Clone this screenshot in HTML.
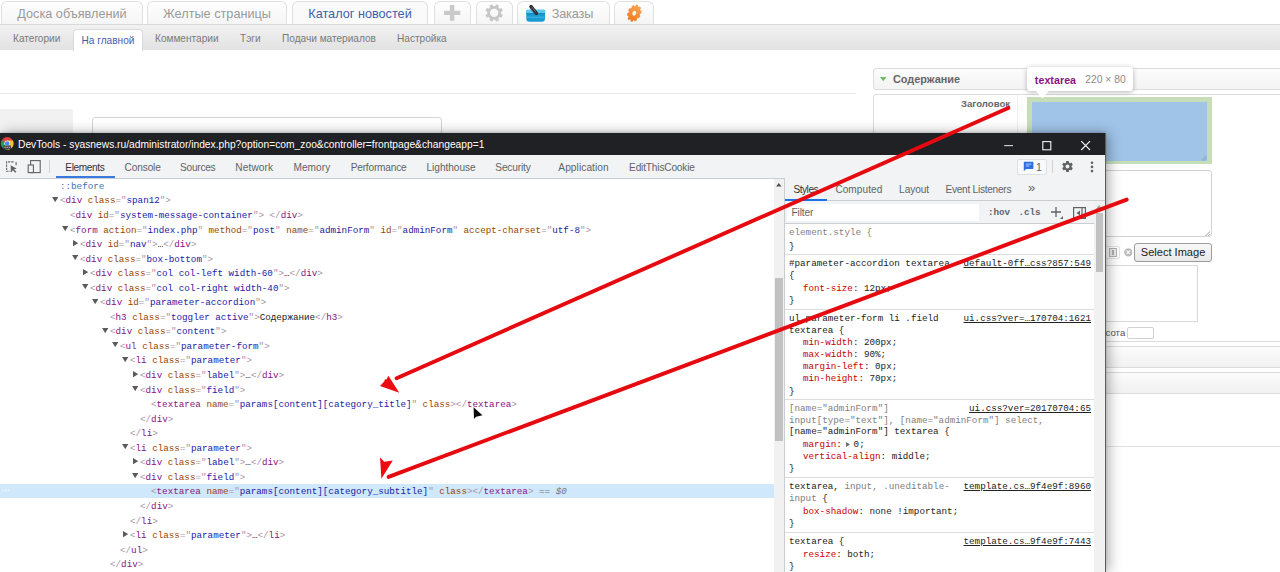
<!DOCTYPE html>
<html lang="ru">
<head>
<meta charset="utf-8">
<title>DevTools</title>
<style>
*{box-sizing:border-box;margin:0;padding:0}
html,body{width:1280px;height:572px;overflow:hidden;background:#fff}
body{position:relative;font-family:"Liberation Sans",sans-serif;color:#333}
.abs{position:absolute}
/* ---------- background page ---------- */
#toptabs{position:absolute;left:0;top:0;width:1280px;height:25px;background:#fff}
.ttab{position:absolute;top:1px;height:24px;border:1px solid #e0e0e0;border-bottom:none;border-radius:6px 6px 0 0;
  background:linear-gradient(#ffffff,#f4f4f4);font-size:12.7px;color:#9a9a9a;text-align:center;line-height:25px;white-space:nowrap}
.ttab.act{background:#fafafa;color:#3e5fae}
#subnav{position:absolute;left:0;top:24px;width:1280px;height:26px;background:linear-gradient(#f2f2f2,#e2e2e2);border-top:1px solid #d9d9d9}
.sn{position:absolute;top:0;height:26px;line-height:27px;font-size:10.1px;color:#7a7a7a;white-space:nowrap}
.sn.act{top:4px;height:22px;line-height:21px;background:#fff;border:1px solid #dadada;border-bottom:none;border-radius:4px 4px 0 0;color:#3e5fae;text-align:center}
/* ---------- devtools ---------- */
#dt{position:absolute;left:0;top:133px;width:1105px;height:439px;background:#fff;box-shadow:1px 0 0 #5c5c5c, 0 0 3px rgba(0,0,0,.25), 4px 0 12px rgba(0,0,0,.32)}
#dt-title{position:absolute;left:0;top:0;width:1105px;height:22px;background:#202124;color:#fff;font-size:10.25px;line-height:23px}
#dt-bar{position:absolute;left:0;top:22px;width:1105px;height:24px;background:#f1f3f4;border-bottom:1px solid #cbcdd1}
.dtab{position:absolute;top:1px;height:23px;line-height:24px;font-size:10.1px;color:#5f6368;white-space:nowrap}
.mono{font-family:"Liberation Mono",monospace;font-size:9.24px;white-space:pre}
.ln{position:absolute;left:0;height:14.55px;line-height:14.55px;width:774px}
.ln .mono{margin-top:1.9px}
.t{color:#a894a6}.tn{color:#881280}.an{color:#994500}.av{color:#1a1aa6}.tx{color:#222}
.tri{position:absolute;font-size:7px;color:#5f6368;line-height:14.55px;font-family:"Liberation Sans",sans-serif}

#elp{position:absolute;left:0;top:0;width:774px;height:439px;overflow:hidden}
.ln.sel{background:#cfe8fc}

#stp{position:absolute;left:784px;top:45px;width:321px;height:394px;background:#fff;border-left:1px solid #cbcdd1;overflow:hidden}
.stab{top:0;line-height:23px;font-size:10.1px;color:#5f6368;white-space:nowrap}
.pn{color:#c80000}.pv{color:#222}.gs{color:#808080}
.lk{color:#4a4a4a;text-decoration:underline;text-decoration-thickness:.8px;text-underline-offset:1px}
#stp .mono{color:#222}
</style>
</head>
<body>

<!-- ================= background page ================= -->
<div id="toptabs">
  <svg class="abs" style="left:0;top:0;z-index:2" width="680" height="25" viewBox="0 0 680 25">
    <path d="M444 12.900h16.300M452.100 5.100v15.700" stroke="#c9c9c9" stroke-width="4.400" fill="none"/>
    <path d="M501.02 13.98L502.90 14.77L501.68 17.73L499.78 16.96L498.26 18.48L499.03 20.38L496.07 21.60L495.28 19.72L493.12 19.72L492.33 21.60L489.37 20.38L490.14 18.48L488.62 16.96L486.72 17.73L485.50 14.77L487.38 13.98L487.38 11.82L485.50 11.03L486.72 8.07L488.62 8.84L490.14 7.32L489.37 5.42L492.33 4.20L493.12 6.08L495.28 6.08L496.07 4.20L499.03 5.42L498.26 7.32L499.78 8.84L501.68 8.07L502.90 11.03L501.02 11.82ZM498.40 12.90A4.2 4.2 0 1 0 490.00 12.90A4.2 4.2 0 1 0 498.40 12.90Z" fill="#c7c7c7" fill-rule="evenodd"/>
    <!-- basket -->
    <path d="M526 11.200q0-1.600 1.600-1.600h16.100q1.600 0 1.600 1.600v2.200h-19.300z" fill="#5cc9ec"/>
    <path d="M526.300 13h18.700v5.800q0 3-3 3h-12.700q-3 0-3-3z" fill="#1a9bd0"/>
    <path d="M526.300 13h18.700v1.200h-18.700z" fill="#158cc0"/>
    <path d="M526.800 17.300h17.700" stroke="#39b4e3" stroke-width="1.200"/>
    <path d="M531 6.600l5.400 6.800" stroke="#2f343b" stroke-width="3.600" stroke-linecap="round"/>
    <path d="M532.300 7.600l3.200 4" stroke="#6a7078" stroke-width="1" stroke-linecap="round"/>
    <!-- orange gear -->
    <defs><linearGradient id="og" x1="0" y1="0" x2="0" y2="1"><stop offset="0" stop-color="#f9a552"/><stop offset="1" stop-color="#f07a1c"/></linearGradient></defs>
    <g transform="translate(634.300 13.200) rotate(28) scale(.74 1)"><path d="M7.55 -0.91L9.09 -0.52L8.80 2.31L7.21 2.39L6.64 3.70L7.66 4.92L5.76 7.04L4.43 6.17L3.20 6.90L3.30 8.48L0.52 9.09L-0.04 7.60L-1.47 7.46L-2.31 8.80L-4.92 7.66L-4.50 6.12L-5.57 5.17L-7.04 5.76L-8.48 3.30L-7.24 2.31L-7.55 0.91L-9.09 0.52L-8.80 -2.31L-7.21 -2.39L-6.64 -3.70L-7.66 -4.92L-5.76 -7.04L-4.43 -6.17L-3.20 -6.90L-3.30 -8.48L-0.52 -9.09L0.04 -7.60L1.47 -7.46L2.31 -8.80L4.92 -7.66L4.50 -6.12L5.57 -5.17L7.04 -5.76L8.48 -3.30L7.24 -2.31ZM2.50 0.00A2.5 2.5 0 1 0 -2.50 0.00A2.5 2.5 0 1 0 2.50 0.00Z" fill="url(#og)" fill-rule="evenodd"/></g>
  </svg>

  <div class="ttab" style="left:1px;width:142px">Доска объявлений</div>
  <div class="ttab" style="left:147px;width:140px">Желтые страницы</div>
  <div class="ttab act" style="left:292px;width:136px">Каталог новостей</div>
  <div class="ttab" style="left:434px;width:37px"></div>
  <div class="ttab" style="left:476px;width:37px"></div>
  <div class="ttab" style="left:517px;width:93px;text-align:left;padding-left:33.700px;letter-spacing:-.15px">Заказы</div>
  <div class="ttab" style="left:614px;width:40px"></div>
</div>
<div id="subnav">
  <div class="sn" style="left:13px">Категории</div>
  <div class="sn act" style="left:73px;width:70px">На главной</div>
  <div class="sn" style="left:155px">Комментарии</div>
  <div class="sn" style="left:240px">Тэги</div>
  <div class="sn" style="left:282px">Подачи материалов</div>
  <div class="sn" style="left:397px">Настройка</div>
</div>


<!-- page body bits -->
<div class="abs" style="left:0;top:92.600px;width:856px;height:1px;background:#ebebeb"></div>
<div class="abs" style="left:0;top:109px;width:73px;height:30px;background:#f1f1f1"></div>
<div class="abs" style="left:92px;top:117px;width:350px;height:30px;border:1px solid #d4d4d4;border-radius:3px;background:#fff"></div>

<!-- right panel -->
<div class="abs" style="left:873px;top:68px;width:420px;height:22px;border:1px solid #dcdcdc;border-radius:3px;background:linear-gradient(#fcfcfc,#f3f3f3)"></div>
<svg class="abs" style="left:879.500px;top:77.300px" width="6.400" height="4.400" viewBox="0 0 9 6"><path d="M0 0H9L4.500 6Z" fill="#6cbf63"/></svg>
<div class="abs" style="left:893px;top:68px;line-height:23px;font-size:10.9px;font-weight:bold;color:#666">Содержание</div>
<div class="abs" style="left:873px;top:94px;width:420px;height:248px;border:1px solid #dcdcdc;border-radius:3px;background:#fff"></div>
<div class="abs" style="left:1017px;top:95px;width:1px;height:246px;background:#ededed"></div>
<div class="abs" style="left:961px;top:98px;font-size:9.600px;font-weight:bold;color:#666;line-height:12px">Заголовок</div>
<!-- highlighted textarea -->
<div class="abs" style="left:1027.200px;top:97.400px;width:184.400px;height:67px;background:#c5deb8"></div>
<div class="abs" style="left:1031.800px;top:101.500px;width:174.900px;height:59px;background:#a0c4e8"></div>
<!-- second textarea -->
<div class="abs" style="left:1027px;top:170px;width:185px;height:67px;border:1px solid #d2d2d2;border-radius:3px;background:#fff"></div>
<svg class="abs" style="left:1204.500px;top:230.500px" width="5.500" height="5.500" viewBox="0 0 7 7"><path d="M7 0L0 7M7 3.500L3.500 7" stroke="#8a8a8a" stroke-width="1.100"/></svg>
<svg class="abs" style="left:1202.400px;top:156px" width="4.600" height="4.600" viewBox="0 0 7 7"><path d="M7 0L0 7M7 3.500L3.500 7" stroke="#7d93a8" stroke-width="1.200"/></svg>
<!-- select image row -->
<div class="abs" style="left:1100px;top:245.500px;width:20px;height:13.500px;border:1px solid #e4e4e4;border-radius:2px;background:#fff"></div><div class="abs" style="left:1108.800px;top:248px;width:8.600px;height:9.200px;border:1px solid #b4b4b4;background:#ececec"></div><div class="abs" style="left:1112.400px;top:250.200px;width:1.400px;height:4.800px;background:#b0b0b0"></div>
<svg class="abs" style="left:1123.500px;top:248px" width="8.600" height="8.600" viewBox="0 0 10 10"><circle cx="5" cy="5" r="4.800" fill="#bcbcbc"/><path d="M3.100 3.100l3.800 3.800M6.900 3.100l-3.800 3.800" stroke="#fff" stroke-width="1.300"/></svg>
<div class="abs" style="left:1134.300px;top:242.500px;width:77.500px;height:19.700px;border:1px solid #9c9c9c;border-radius:3px;background:linear-gradient(#f8f8f8,#e9e9e9);font-size:11.050px;color:#222;text-align:center;line-height:16.400px">Select Image</div>
<div class="abs" style="left:1027px;top:264.500px;width:170.800px;height:57.300px;border:1px solid #d8d8d8;background:#fff"></div>
<div class="abs" style="left:1105.600px;top:326.600px;font-size:9.600px;color:#555;line-height:12px">сота</div>
<div class="abs" style="left:1127px;top:326.500px;width:27px;height:12.600px;border:1px solid #d2d2d2;border-radius:2px;background:#fff"></div>
<!-- collapsed headers -->
<div class="abs" style="left:873px;top:346px;width:420px;height:22px;border:1px solid #dcdcdc;border-radius:3px;background:linear-gradient(#fcfcfc,#f1f1f1)"></div>
<div class="abs" style="left:873px;top:372.300px;width:420px;height:21.600px;border:1px solid #dcdcdc;border-radius:3px;background:linear-gradient(#fcfcfc,#f1f1f1)"></div>
<div class="abs" style="left:1105px;top:446px;width:175px;height:1px;background:#e2e2e2"></div>

<!-- ================= devtools window ================= -->
<div id="dt">
  <div id="dt-title"><span class="abs" style="left:18px;top:0">DevTools - syasnews.ru/administrator/index.php?option=com_zoo&amp;controller=frontpage&amp;changeapp=1</span>
    <svg class="abs" style="left:0;top:3px" width="15" height="15" viewBox="0 0 15 15">
      <circle cx="7.2" cy="7.4" r="6.3" fill="#db4437"/>
      <path d="M7.2 7.4L1.7 4.3A6.3 6.3 0 0 0 7.8 13.7L10.4 9.2Z" fill="#1e9d57"/>
      <path d="M7.2 7.4L10.4 9.2L7.8 13.7A6.3 6.3 0 0 0 12.9 4.6L7.2 4.6Z" fill="#f6c12d"/>
      <circle cx="7.2" cy="7.4" r="2.9" fill="#f1f1f1"/>
      <circle cx="7.2" cy="7.4" r="2.2" fill="#4285f4"/>
      <rect x="3.4" y="9.6" width="7.6" height="3.4" rx=".6" fill="#3c4043"/>
      <path d="M4.4 11.3h5.6" stroke="#cfcfcf" stroke-width="1" stroke-dasharray="1.4 .7"/>
    </svg>
    <svg class="abs" style="left:1000px;top:0" width="100" height="22" viewBox="0 0 100 22">
      <path d="M4.2 12.6h8.8" stroke="#d8d8d8" stroke-width="1.1"/>
      <rect x="42.8" y="8.6" width="8" height="8.2" fill="none" stroke="#f4f4f4" stroke-width="1.1"/>
      <path d="M81.2 8.2l8.8 8.8M90 8.2l-8.8 8.8" stroke="#f4f4f4" stroke-width="1.15"/>
    </svg>
  </div>

  <div id="dt-bar">

    <svg class="abs" style="left:4px;top:4px" width="40" height="16" viewBox="0 0 40 16">
      <path d="M9.5 2.9H2.6V12.3H6.6" fill="none" stroke="#5f6368" stroke-width="1.1" stroke-dasharray="2.2 1"/>
      <path d="M12.1 2.9V6.2" fill="none" stroke="#5f6368" stroke-width="1.1"/>
      <path d="M6.6 6.3L7 13.4L8.9 11.3L11.2 13.8L12.4 12.7L10.1 10.4L12.6 9.4Z" fill="#5f6368"/>
      <rect x="26.6" y="1.6" width="9.6" height="12" fill="none" stroke="#5f6368" stroke-width="1.1"/>
      <rect x="24.2" y="6" width="5.2" height="7.6" fill="#f1f3f4" stroke="#5f6368" stroke-width="1.1"/>
    </svg>
    <div class="abs" style="left:49px;top:5px;width:1px;height:13px;background:#cfd1d4"></div>
    <div class="abs" style="left:1017px;top:4px;width:30px;height:16px;border:1px solid #dddfe2;border-radius:2px;background:#f8f9fa"></div>
    <svg class="abs" style="left:1023px;top:6px" width="11" height="11" viewBox="0 0 11 11"><path d="M1.4 .8h8.2a.8.8 0 0 1 .8.8v5.6a.8.8 0 0 1-.8.8H3L.8 10.2V1.600a.8.8 0 0 1 .6-.8z" fill="#2f6fe0"/><path d="M2.8 3.1h5.6M2.8 5h3.6" stroke="#cfe0ff" stroke-width=".8"/></svg>
    <div class="abs" style="left:1036px;top:0;line-height:24px;font-size:10.5px;color:#5f6368">1</div>
    <div class="abs" style="left:1052px;top:5px;width:1px;height:13px;background:#cfd1d4"></div>
    <svg class="abs" style="left:1061px;top:5px" width="13" height="13" viewBox="0 0 24 24"><path fill="#5f6368" d="M19.43 12.98c.04-.32.07-.64.07-.98s-.03-.66-.07-.98l2.11-1.65c.19-.15.24-.42.12-.64l-2-3.46c-.12-.22-.39-.3-.61-.22l-2.49 1c-.52-.4-1.08-.73-1.69-.98l-.38-2.650A.488.488 0 0 0 14 2h-4c-.25 0-.46.18-.49.42l-.38 2.650c-.61.25-1.170.59-1.690.98l-2.490-1c-.23-.09-.49 0-.61.22l-2 3.460c-.13.220-.07.49.12.640l2.110 1.650c-.04.320-.07.650-.07.980s.03.660.07.980l-2.110 1.650c-.19.150-.24.420-.12.640l2 3.460c.12.220.39.300.61.220l2.490-1c.52.400 1.080.73 1.690.98l.38 2.650c.03.240.24.420.49.420h4c.25 0 .46-.18.490-.42l.38-2.650c.61-.25 1.170-.59 1.690-.98l2.490 1c.23.090.49 0 .61-.22l2-3.460c.12-.22.070-.49-.12-.64l-2.110-1.650zM12 15.500c-1.930 0-3.500-1.570-3.500-3.500s1.570-3.500 3.500-3.500 3.500 1.570 3.500 3.500-1.570 3.500-3.500 3.500z"/></svg>
    <svg class="abs" style="left:1089px;top:5px" width="6" height="14" viewBox="0 0 6 14"><circle cx="3" cy="2.800" r="1.300" fill="#5f6368"/><circle cx="3" cy="6.900" r="1.300" fill="#5f6368"/><circle cx="3" cy="11.100" r="1.300" fill="#5f6368"/></svg>
    <div class="dtab" style="left:65.3px;letter-spacing:-0.36px;color:#333">Elements</div>
    <div class="abs" style="left:55.7px;top:21.3px;width:59.6px;height:2.2px;background:#3b79e0"></div>
    <div class="dtab" style="left:124.6px;letter-spacing:-0.13px">Console</div>
    <div class="dtab" style="left:180.1px;letter-spacing:-0.25px">Sources</div>
    <div class="dtab" style="left:235.3px;letter-spacing:0.13px">Network</div>
    <div class="dtab" style="left:293.4px;letter-spacing:0.08px">Memory</div>
    <div class="dtab" style="left:350.7px;letter-spacing:-0.18px">Performance</div>
    <div class="dtab" style="left:426.5px;letter-spacing:-0.03px">Lighthouse</div>
    <div class="dtab" style="left:495.3px;letter-spacing:-0.15px">Security</div>
    <div class="dtab" style="left:558.3px;letter-spacing:0.1px">Application</div>
    <div class="dtab" style="left:629.1px;letter-spacing:-0.16px">EditThisCookie</div>
  </div>

  <!-- elements scrollbar -->
  <div class="abs" style="left:774px;top:46px;width:10px;height:393px;background:#f1f1f1"></div>
  <svg class="abs" style="left:776px;top:50px" width="5.600" height="3.600" viewBox="0 0 6 4"><path d="M0 4H6L3 0Z" fill="#505050"/></svg>
  <div class="abs" style="left:774.500px;top:144.500px;width:8.200px;height:163.500px;background:#c1c1c1"></div>
  <!-- styles pane -->
  <div id="stp">
    <div class="abs" style="left:0;top:0;width:320px;height:23px;background:#f1f3f4;border-bottom:1px solid #cbcdd1"></div>
    <div class="abs stab" style="left:8.4px;letter-spacing:-0.45px;color:#333">Styles</div>
    <div class="abs" style="left:0;top:21px;width:42px;height:2px;background:#1a73e8"></div>
    <div class="abs stab" style="left:50.4px;letter-spacing:0.04px">Computed</div>
    <div class="abs stab" style="left:114.1px;letter-spacing:-0.07px">Layout</div>
    <div class="abs stab" style="left:160.5px;letter-spacing:-0.26px">Event Listeners</div>
    <div class="abs stab" style="left:243px;font-size:13px;top:-2px">»</div>
    <div class="abs" style="left:0;top:23px;width:320px;height:23px;background:#f1f3f4;border-bottom:1px solid #cbcdd1"></div>
    <div class="abs" style="left:2px;top:25.5px;width:192px;height:17.5px;background:#fff"></div>
    <div class="abs stab" style="left:6.6px;top:24px;line-height:22px;letter-spacing:-.15px">Filter</div>
    <div class="abs mono" style="left:203px;top:24px;line-height:22px;color:#5f6368;font-weight:bold">:hov</div>
    <div class="abs mono" style="left:233.5px;top:24px;line-height:22px;color:#5f6368;font-weight:bold">.cls</div>
    <svg class="abs" style="left:264.5px;top:28px" width="14" height="14" viewBox="0 0 14 14"><path d="M1 6h10M6 1v10" stroke="#5f6368" stroke-width="1.3" fill="none"/><path d="M13 10v3h-3z" fill="#5f6368"/></svg>
    <svg class="abs" style="left:288px;top:28.700px" width="13" height="12" viewBox="0 0 13 12"><rect x=".6" y=".6" width="11.8" height="10.8" fill="none" stroke="#5f6368" stroke-width="1.2"/><path d="M9 1v10" stroke="#5f6368" stroke-width="1.2"/><path d="M7 3.5v5L3.5 6z" fill="#5f6368"/></svg>
    <!-- styles scrollbar -->
    <div class="abs" style="left:309px;top:23px;width:11px;height:371px;background:#f1f1f1;z-index:3"></div>
    <div class="abs" style="left:310.5px;top:35px;width:7.5px;height:59px;background:#c1c1c1;z-index:4"></div>
    <svg class="abs" style="left:311px;top:27px;z-index:4" width="6" height="4" viewBox="0 0 6 4"><path d="M0 4H6L3 0Z" fill="#a3a3a3"/></svg>
    <div class="abs mono" style="left:4px;top:49.0px;line-height:12px;"><span class="gs">element.style {</span></div>
    <div class="abs mono" style="left:4px;top:62.5px;line-height:12px;">}</div>
    <div class="abs" style="left:0;top:76.0px;width:309px;height:1px;background:#dcdcdc"></div>
    <div class="abs mono" style="left:4px;top:79.5px;line-height:12px;">#parameter-accordion textarea</div>
    <div class="abs mono lk" style="right:14px;top:79.5px;line-height:12px">default-0ff…css?857:549</div>
    <div class="abs mono" style="left:4px;top:92.0px;line-height:12px;">{</div>
    <div class="abs mono" style="left:18px;top:104.5px;line-height:12px;"><span class="pn">font-size</span><span class="pv">: 12px;</span></div>
    <div class="abs mono" style="left:4px;top:116.5px;line-height:12px;">}</div>
    <div class="abs" style="left:0;top:130.8px;width:309px;height:1px;background:#dcdcdc"></div>
    <div class="abs mono" style="left:4px;top:135.0px;line-height:12px;">ul.parameter-form li .field</div>
    <div class="abs mono lk" style="right:14px;top:135.0px;line-height:12px">ui.css?ver=…170704:1621</div>
    <div class="abs mono" style="left:4px;top:147.0px;line-height:12px;">textarea {</div>
    <div class="abs mono" style="left:18px;top:159.3px;line-height:12px;"><span class="pn">min-width</span><span class="pv">: 200px;</span></div>
    <div class="abs mono" style="left:18px;top:171.2px;line-height:12px;"><span class="pn">max-width</span><span class="pv">: 90%;</span></div>
    <div class="abs mono" style="left:18px;top:183.1px;line-height:12px;"><span class="pn">margin-left</span><span class="pv">: 0px;</span></div>
    <div class="abs mono" style="left:18px;top:195.0px;line-height:12px;"><span class="pn">min-height</span><span class="pv">: 70px;</span></div>
    <div class="abs mono" style="left:4px;top:207.5px;line-height:12px;">}</div>
    <div class="abs" style="left:0;top:221.3px;width:309px;height:1px;background:#dcdcdc"></div>
    <div class="abs mono" style="left:4px;top:224.7px;line-height:12px;"><span class="gs">[name="adminForm"]</span></div>
    <div class="abs mono lk" style="right:14px;top:224.7px;line-height:12px">ui.css?ver=20170704:65</div>
    <div class="abs mono" style="left:4px;top:236.5px;line-height:12px;"><span class="gs">input[type="text"], [name="adminForm"] select,</span></div>
    <div class="abs mono" style="left:4px;top:248.3px;line-height:12px;">[name="adminForm"] textarea {</div>
    <div class="abs mono" style="left:18px;top:261.0px;line-height:12px;"><span class="pn">margin</span><span class="pv">:<svg width="4" height="5" viewBox="0 0 4 5" style="vertical-align:0;margin:0 3.8px 0 4px"><path d="M0 0V5L4 2.5Z" fill="#6e6e6e"/></svg>0;</span></div>
    <div class="abs mono" style="left:18px;top:273.2px;line-height:12px;"><span class="pn">vertical-align</span><span class="pv">: middle;</span></div>
    <div class="abs mono" style="left:4px;top:285.0px;line-height:12px;">}</div>
    <div class="abs" style="left:0;top:299.2px;width:309px;height:1px;background:#dcdcdc"></div>
    <div class="abs mono" style="left:4px;top:303.0px;line-height:12px;">textarea, <span class="gs">input, .uneditable-</span></div>
    <div class="abs mono lk" style="right:14px;top:303.0px;line-height:12px">template.cs…9f4e9f:8960</div>
    <div class="abs mono" style="left:4px;top:314.5px;line-height:12px;"><span class="gs">input</span> {</div>
    <div class="abs mono" style="left:18px;top:328.0px;line-height:12px;"><span class="pn">box-shadow</span><span class="pv">: none !important;</span></div>
    <div class="abs mono" style="left:4px;top:340.0px;line-height:12px;">}</div>
    <div class="abs" style="left:0;top:354.2px;width:309px;height:1px;background:#dcdcdc"></div>
    <div class="abs mono" style="left:4px;top:357.5px;line-height:12px;">textarea {</div>
    <div class="abs mono lk" style="right:14px;top:357.5px;line-height:12px">template.cs…9f4e9f:7443</div>
    <div class="abs mono" style="left:18px;top:370.5px;line-height:12px;"><span class="pn">resize</span><span class="pv">: both;</span></div>
    <div class="abs mono" style="left:4px;top:383.0px;line-height:12px;">}</div>
  </div>
  <div id="elp">
    <div class="ln" style="top:45.00px"><span class="abs mono" style="left:60px;top:0"><span style="color:#3f6fb5">::before</span></span></div>
    <div class="ln" style="top:59.55px"><svg class="abs" style="left:52px;top:4.200px" width="6.400" height="5.200" viewBox="0 0 6 5"><path d="M0 0H6L3 5Z" fill="#5a5a5a"/></svg><span class="abs mono" style="left:60px;top:0"><span class="t">&lt;</span><span class="tn">div</span> <span class="an">class</span><span class="t">="</span><span class="av">span12</span><span class="t">"</span><span class="t">&gt;</span></span></div>
    <div class="ln" style="top:74.10px"><span class="abs mono" style="left:70px;top:0"><span class="t">&lt;</span><span class="tn">div</span> <span class="an">id</span><span class="t">="</span><span class="av">system-message-container</span><span class="t">"</span><span class="t">&gt;</span> <span class="t">&lt;/</span><span class="tn">div</span><span class="t">&gt;</span></span></div>
    <div class="ln" style="top:88.65px"><svg class="abs" style="left:62px;top:4.200px" width="6.400" height="5.200" viewBox="0 0 6 5"><path d="M0 0H6L3 5Z" fill="#5a5a5a"/></svg><span class="abs mono" style="left:70px;top:0"><span class="t">&lt;</span><span class="tn">form</span> <span class="an">action</span><span class="t">="</span><span class="av">index.php</span><span class="t">"</span> <span class="an">method</span><span class="t">="</span><span class="av">post</span><span class="t">"</span> <span class="an">name</span><span class="t">="</span><span class="av">adminForm</span><span class="t">"</span> <span class="an">id</span><span class="t">="</span><span class="av">adminForm</span><span class="t">"</span> <span class="an">accept-charset</span><span class="t">="</span><span class="av">utf-8</span><span class="t">"</span><span class="t">&gt;</span></span></div>
    <div class="ln" style="top:103.20px"><svg class="abs" style="left:73px;top:3.400px" width="5.200" height="6.400" viewBox="0 0 5 6"><path d="M0 0V6L5 3Z" fill="#5a5a5a"/></svg><span class="abs mono" style="left:80px;top:0"><span class="t">&lt;</span><span class="tn">div</span> <span class="an">id</span><span class="t">="</span><span class="av">nav</span><span class="t">"</span><span class="t">&gt;</span><span class="tx">…</span><span class="t">&lt;/</span><span class="tn">div</span><span class="t">&gt;</span></span></div>
    <div class="ln" style="top:117.75px"><svg class="abs" style="left:72px;top:4.200px" width="6.400" height="5.200" viewBox="0 0 6 5"><path d="M0 0H6L3 5Z" fill="#5a5a5a"/></svg><span class="abs mono" style="left:80px;top:0"><span class="t">&lt;</span><span class="tn">div</span> <span class="an">class</span><span class="t">="</span><span class="av">box-bottom</span><span class="t">"</span><span class="t">&gt;</span></span></div>
    <div class="ln" style="top:132.30px"><svg class="abs" style="left:83px;top:3.400px" width="5.200" height="6.400" viewBox="0 0 5 6"><path d="M0 0V6L5 3Z" fill="#5a5a5a"/></svg><span class="abs mono" style="left:90px;top:0"><span class="t">&lt;</span><span class="tn">div</span> <span class="an">class</span><span class="t">="</span><span class="av">col col-left width-60</span><span class="t">"</span><span class="t">&gt;</span><span class="tx">…</span><span class="t">&lt;/</span><span class="tn">div</span><span class="t">&gt;</span></span></div>
    <div class="ln" style="top:146.85px"><svg class="abs" style="left:82px;top:4.200px" width="6.400" height="5.200" viewBox="0 0 6 5"><path d="M0 0H6L3 5Z" fill="#5a5a5a"/></svg><span class="abs mono" style="left:90px;top:0"><span class="t">&lt;</span><span class="tn">div</span> <span class="an">class</span><span class="t">="</span><span class="av">col col-right width-40</span><span class="t">"</span><span class="t">&gt;</span></span></div>
    <div class="ln" style="top:161.40px"><svg class="abs" style="left:92px;top:4.200px" width="6.400" height="5.200" viewBox="0 0 6 5"><path d="M0 0H6L3 5Z" fill="#5a5a5a"/></svg><span class="abs mono" style="left:100px;top:0"><span class="t">&lt;</span><span class="tn">div</span> <span class="an">id</span><span class="t">="</span><span class="av">parameter-accordion</span><span class="t">"</span><span class="t">&gt;</span></span></div>
    <div class="ln" style="top:175.95px"><span class="abs mono" style="left:110px;top:0"><span class="t">&lt;</span><span class="tn">h3</span> <span class="an">class</span><span class="t">="</span><span class="av">toggler active</span><span class="t">"</span><span class="t">&gt;</span><span class="tx">Содержание</span><span class="t">&lt;/</span><span class="tn">h3</span><span class="t">&gt;</span></span></div>
    <div class="ln" style="top:190.50px"><svg class="abs" style="left:102px;top:4.200px" width="6.400" height="5.200" viewBox="0 0 6 5"><path d="M0 0H6L3 5Z" fill="#5a5a5a"/></svg><span class="abs mono" style="left:110px;top:0"><span class="t">&lt;</span><span class="tn">div</span> <span class="an">class</span><span class="t">="</span><span class="av">content</span><span class="t">"</span><span class="t">&gt;</span></span></div>
    <div class="ln" style="top:205.05px"><svg class="abs" style="left:112px;top:4.200px" width="6.400" height="5.200" viewBox="0 0 6 5"><path d="M0 0H6L3 5Z" fill="#5a5a5a"/></svg><span class="abs mono" style="left:120px;top:0"><span class="t">&lt;</span><span class="tn">ul</span> <span class="an">class</span><span class="t">="</span><span class="av">parameter-form</span><span class="t">"</span><span class="t">&gt;</span></span></div>
    <div class="ln" style="top:219.60px"><svg class="abs" style="left:122px;top:4.200px" width="6.400" height="5.200" viewBox="0 0 6 5"><path d="M0 0H6L3 5Z" fill="#5a5a5a"/></svg><span class="abs mono" style="left:130px;top:0"><span class="t">&lt;</span><span class="tn">li</span> <span class="an">class</span><span class="t">="</span><span class="av">parameter</span><span class="t">"</span><span class="t">&gt;</span></span></div>
    <div class="ln" style="top:234.15px"><svg class="abs" style="left:133px;top:3.400px" width="5.200" height="6.400" viewBox="0 0 5 6"><path d="M0 0V6L5 3Z" fill="#5a5a5a"/></svg><span class="abs mono" style="left:140px;top:0"><span class="t">&lt;</span><span class="tn">div</span> <span class="an">class</span><span class="t">="</span><span class="av">label</span><span class="t">"</span><span class="t">&gt;</span><span class="tx">…</span><span class="t">&lt;/</span><span class="tn">div</span><span class="t">&gt;</span></span></div>
    <div class="ln" style="top:248.70px"><svg class="abs" style="left:132px;top:4.200px" width="6.400" height="5.200" viewBox="0 0 6 5"><path d="M0 0H6L3 5Z" fill="#5a5a5a"/></svg><span class="abs mono" style="left:140px;top:0"><span class="t">&lt;</span><span class="tn">div</span> <span class="an">class</span><span class="t">="</span><span class="av">field</span><span class="t">"</span><span class="t">&gt;</span></span></div>
    <div class="ln" style="top:263.25px"><span class="abs mono" style="left:151px;top:0"><span class="t">&lt;</span><span class="tn">textarea</span> <span class="an">name</span><span class="t">="</span><span class="av">params[content][category_title]</span><span class="t">"</span> <span class="an">class</span><span class="t">&gt;</span><span class="t">&lt;/</span><span class="tn">textarea</span><span class="t">&gt;</span></span></div>
    <div class="ln" style="top:277.80px"><span class="abs mono" style="left:140px;top:0"><span class="t">&lt;/</span><span class="tn">div</span><span class="t">&gt;</span></span></div>
    <div class="ln" style="top:292.35px"><span class="abs mono" style="left:130px;top:0"><span class="t">&lt;/</span><span class="tn">li</span><span class="t">&gt;</span></span></div>
    <div class="ln" style="top:306.90px"><svg class="abs" style="left:122px;top:4.200px" width="6.400" height="5.200" viewBox="0 0 6 5"><path d="M0 0H6L3 5Z" fill="#5a5a5a"/></svg><span class="abs mono" style="left:130px;top:0"><span class="t">&lt;</span><span class="tn">li</span> <span class="an">class</span><span class="t">="</span><span class="av">parameter</span><span class="t">"</span><span class="t">&gt;</span></span></div>
    <div class="ln" style="top:321.45px"><svg class="abs" style="left:133px;top:3.400px" width="5.200" height="6.400" viewBox="0 0 5 6"><path d="M0 0V6L5 3Z" fill="#5a5a5a"/></svg><span class="abs mono" style="left:140px;top:0"><span class="t">&lt;</span><span class="tn">div</span> <span class="an">class</span><span class="t">="</span><span class="av">label</span><span class="t">"</span><span class="t">&gt;</span><span class="tx">…</span><span class="t">&lt;/</span><span class="tn">div</span><span class="t">&gt;</span></span></div>
    <div class="ln" style="top:336.00px"><svg class="abs" style="left:132px;top:4.200px" width="6.400" height="5.200" viewBox="0 0 6 5"><path d="M0 0H6L3 5Z" fill="#5a5a5a"/></svg><span class="abs mono" style="left:140px;top:0"><span class="t">&lt;</span><span class="tn">div</span> <span class="an">class</span><span class="t">="</span><span class="av">field</span><span class="t">"</span><span class="t">&gt;</span></span></div>
    <div class="ln sel" style="top:350.55px"><span class="abs" style="left:1px;top:-2.500px;color:#f2f8fe;font-size:9px;font-weight:bold;letter-spacing:0">…</span><span class="abs mono" style="left:151px;top:0"><span class="t">&lt;</span><span class="tn">textarea</span> <span class="an">name</span><span class="t">="</span><span class="av">params[content][category_subtitle]</span><span class="t">"</span> <span class="an">class</span><span class="t">&gt;</span><span class="t">&lt;/</span><span class="tn">textarea</span><span class="t">&gt;</span><span style="color:#777"> == </span><span style="color:#777;font-style:italic">$0</span></span></div>
    <div class="ln" style="top:365.10px"><span class="abs mono" style="left:140px;top:0"><span class="t">&lt;/</span><span class="tn">div</span><span class="t">&gt;</span></span></div>
    <div class="ln" style="top:379.65px"><span class="abs mono" style="left:130px;top:0"><span class="t">&lt;/</span><span class="tn">li</span><span class="t">&gt;</span></span></div>
    <div class="ln" style="top:394.20px"><svg class="abs" style="left:123px;top:3.400px" width="5.200" height="6.400" viewBox="0 0 5 6"><path d="M0 0V6L5 3Z" fill="#5a5a5a"/></svg><span class="abs mono" style="left:130px;top:0"><span class="t">&lt;</span><span class="tn">li</span> <span class="an">class</span><span class="t">="</span><span class="av">parameter</span><span class="t">"</span><span class="t">&gt;</span><span class="tx">…</span><span class="t">&lt;/</span><span class="tn">li</span><span class="t">&gt;</span></span></div>
    <div class="ln" style="top:408.75px"><span class="abs mono" style="left:120px;top:0"><span class="t">&lt;/</span><span class="tn">ul</span><span class="t">&gt;</span></span></div>
    <div class="ln" style="top:423.30px"><span class="abs mono" style="left:110px;top:0"><span class="t">&lt;/</span><span class="tn">div</span><span class="t">&gt;</span></span></div>
  </div>
</div>


<!-- inspector tooltip -->
<div class="abs" style="left:1027px;top:66.500px;width:105.800px;height:24.300px;background:#fff;border-radius:3px;box-shadow:0 1px 5px rgba(0,0,0,.3);z-index:20"></div>
<svg class="abs" style="left:1036px;top:90.500px;z-index:21" width="12.600" height="8" viewBox="0 0 12.600 8"><path d="M0 0H12.600L6.300 7.500Z" fill="#fff"/></svg>
<div class="abs" style="left:1034.800px;top:68.400px;line-height:24px;font-size:10.600px;letter-spacing:.08px;font-weight:bold;color:#881280;z-index:22">textarea</div>
<div class="abs" style="left:1085.300px;top:68.400px;line-height:24px;font-size:10.300px;color:#8a8a8a;z-index:22">220 × 80</div>

<!-- red arrows + cursor -->
<svg class="abs" style="left:0;top:0;z-index:50" width="1280" height="572" viewBox="0 0 1280 572">
  <path d="M1008.3 108L396.6 378.2" stroke="#e60a10" stroke-width="3.900" fill="none" stroke-linecap="round"/>
  <path d="M388.4 375.8L386.4 379.5L385 379.3L384.2 381.6L380 385.9L399.3 392.8Z" fill="#ec0c12"/>
  <path d="M1126.7 199.6L388.6 476.9" stroke="#e60a10" stroke-width="3.900" fill="none" stroke-linecap="round"/>
  <path d="M380 457.2L384.2 461.8L392.8 460.5L381.4 478.7Z" fill="#ec0c12"/>
  <path d="M473.6 407.2L474 419L476.2 416.8L482.4 415.2Z" fill="#0a0a0a"/>
</svg>
</body>
</html>
